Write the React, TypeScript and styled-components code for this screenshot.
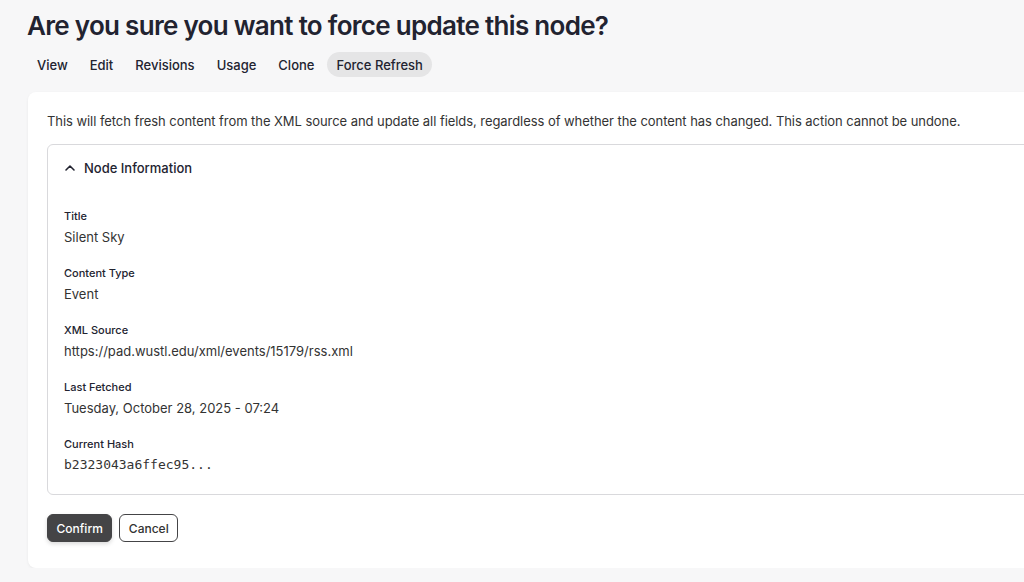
import React from "react";
import styled, { createGlobalStyle } from "styled-components";

const Global = createGlobalStyle`
  html, body { margin: 0; padding: 0; background: #f7f7f8; overflow: hidden; }
  body { font-family: Inter, "Noto Sans", sans-serif; color: #222330; -webkit-font-smoothing: antialiased; }
  * { box-sizing: border-box; }
`;

const Page = styled.div`
  padding: 8px 0 0 28px;
  width: 1100px;
`;

const Title = styled.h1`
  margin: 0 0 0 -1px;
  font-size: 26px;
  line-height: 36px;
  font-weight: 600;
  letter-spacing: -0.7px;
  color: #222330;
`;

const Tabs = styled.nav`
  display: flex;
  gap: 4px;
  margin-top: 8px;
`;

const Tab = styled.a<{ $active?: boolean }>`
  display: inline-flex;
  align-items: center;
  height: 25px;
  padding: 0 9px;
  border-radius: 13px;
  font-size: 13px;
  font-weight: 500;
  color: #222330;
  background: ${(p) => (p.$active ? "#e5e5e6" : "transparent")};
`;

const Card = styled.section`
  margin-top: 15px;
  width: 1040px;
  background: #fff;
  border-radius: 8px;
  box-shadow: 0 1px 3px rgba(0, 0, 0, 0.06);
  padding: 20px 19px 26px;
`;

const Lead = styled.p`
  margin: 0;
  font-size: 13px;
  line-height: 18px;
  letter-spacing: -0.06px;
  color: #333;
`;

const Details = styled.div`
  margin-top: 14px;
  border: 1px solid #d9d9dc;
  border-radius: 6px;
  padding: 0 16px 19px;
`;

const Summary = styled.div`
  display: flex;
  align-items: center;
  gap: 8px;
  height: 46px;
  font-size: 13px;
  font-weight: 500;
  color: #222330;
`;

const Fields = styled.dl`
  margin: 17px 0 0;
  display: flex;
  flex-direction: column;
  gap: 18px;
`;

const Field = styled.div`
  display: flex;
  flex-direction: column;
  gap: 3px;
`;

const Label = styled.dt`
  font-size: 11px;
  line-height: 16px;
  font-weight: 500;
  color: #222330;
`;

const Value = styled.dd<{ $mono?: boolean }>`
  margin: 0;
  font-size: 13px;
  line-height: 20px;
  color: #333;
  font-family: ${(p) => (p.$mono ? '"DejaVu Sans Mono", monospace' : "inherit")};
`;

const Actions = styled.div`
  display: flex;
  gap: 7px;
  margin-top: 19px;
`;

const Button = styled.button<{ $primary?: boolean }>`
  height: 28px;
  padding: 0 8.5px;
  border-radius: 6px;
  font-family: Inter, sans-serif;
  font-size: 12px;
  font-weight: 500;
  cursor: pointer;
  color: ${(p) => (p.$primary ? "#fff" : "#333")};
  background: ${(p) => (p.$primary ? "#444446" : "#fff")};
  border: ${(p) => (p.$primary ? "1px solid #444446" : "1.5px solid #444446")};
  box-shadow: ${(p) => (p.$primary ? "0 2px 4px rgba(0,0,0,0.15)" : "none")};
`;

const Chevron = () => (
  <svg width="12" height="12" viewBox="0 0 12 12" fill="none">
    <path d="M2 8 L6 4 L10 8" stroke="#222330" strokeWidth="1.6" strokeLinecap="round" strokeLinejoin="round" />
  </svg>
);

const fields: { label: string; value: string; mono?: boolean }[] = [
  { label: "Title", value: "Silent Sky" },
  { label: "Content Type", value: "Event" },
  { label: "XML Source", value: "https://pad.wustl.edu/xml/events/15179/rss.xml" },
  { label: "Last Fetched", value: "Tuesday, October 28, 2025 - 07:24" },
  { label: "Current Hash", value: "b2323043a6ffec95...", mono: true },
];

export default function App() {
  return (
    <>
      <Global />
      <Page>
        <Title>Are you sure you want to force update this node?</Title>
        <Tabs>
          <Tab>View</Tab>
          <Tab>Edit</Tab>
          <Tab>Revisions</Tab>
          <Tab>Usage</Tab>
          <Tab>Clone</Tab>
          <Tab $active>Force Refresh</Tab>
        </Tabs>
        <Card>
          <Lead>
            This will fetch fresh content from the XML source and update all fields, regardless of whether the content has changed. This action cannot be undone.
          </Lead>
          <Details>
            <Summary>
              <Chevron />
              Node Information
            </Summary>
            <Fields>
              {fields.map((f) => (
                <Field key={f.label}>
                  <Label>{f.label}</Label>
                  <Value $mono={f.mono}>{f.value}</Value>
                </Field>
              ))}
            </Fields>
          </Details>
          <Actions>
            <Button $primary>Confirm</Button>
            <Button>Cancel</Button>
          </Actions>
        </Card>
      </Page>
    </>
  );
}
